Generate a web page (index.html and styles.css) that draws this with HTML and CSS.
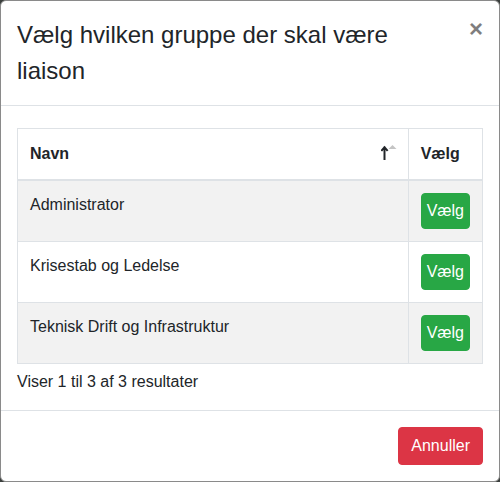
FILE: index.html
```html
<!DOCTYPE html>
<html lang="da">
<head>
<meta charset="utf-8">
<title>Vælg gruppe</title>
<link rel="stylesheet" href="styles.css">
</head>
<body>
<div class="modal">
  <div class="modal-header">
    <h4 class="modal-title">Vælg hvilken gruppe der skal være liaison</h4>
    <button class="close" type="button" aria-label="Luk">×</button>
  </div>
  <div class="modal-body">
    <table class="table">
      <thead>
        <tr>
          <th class="sorted">Navn
            <span class="sort-icon">
              <svg width="16" height="16" viewBox="0 0 16 16">
                <path d="M3.5 15V3.5M1 6.2L3.5 3.2L6 6.2" fill="none" stroke="#212529" stroke-width="2" stroke-linecap="square"/>
                <path d="M7.5 5L11.5 1L15.5 5Z" fill="#c4c4c4"/>
              </svg>
            </span>
          </th>
          <th class="narrow">Vælg</th>
        </tr>
      </thead>
      <tbody>
        <tr class="odd"><td>Administrator</td><td class="narrow"><button class="btn btn-success" type="button">Vælg</button></td></tr>
        <tr><td>Krisestab og Ledelse</td><td class="narrow"><button class="btn btn-success" type="button">Vælg</button></td></tr>
        <tr class="odd"><td>Teknisk Drift og Infrastruktur</td><td class="narrow"><button class="btn btn-success" type="button">Vælg</button></td></tr>
      </tbody>
    </table>
    <div class="info">Viser 1 til 3 af 3 resultater</div>
  </div>
  <div class="modal-footer">
    <button class="btn btn-danger btn-cancel" type="button">Annuller</button>
  </div>
</div>
</body>
</html>
```
FILE: styles.css
```css
* { box-sizing: border-box; }
html, body {
  margin: 0;
  background: #3b3f3d;
}
body {
  font-family: "Liberation Sans", Arial, sans-serif;
  font-size: 16px;
  line-height: 1.5;
  color: #212529;
}
.modal {
  width: 500px;
  height: 482px;
  background: #fff;
  border: 1px solid #8a8a8a;
  border-radius: 6px;
  display: flex;
  flex-direction: column;
  overflow: hidden;
}
.modal-header {
  display: flex;
  align-items: flex-start;
  padding: 16px;
  border-bottom: 1px solid #dee2e6;
}
.modal-title {
  margin: 0;
  font-size: 24px;
  font-weight: 400;
  line-height: 36px;
  padding-right: 12px;
}
.close {
  margin: -16px -16px -16px auto;
  padding: 16px;
  background: transparent;
  border: 0;
  font-family: "Liberation Sans", Arial, sans-serif;
  font-size: 24px;
  font-weight: 700;
  line-height: 1;
  color: #000;
  opacity: .5;
  cursor: pointer;
}
.modal-body {
  padding: 16px;
}
.table {
  width: 100%;
  border-collapse: collapse;
  margin: 6px 0;
  border: 1px solid #dee2e6;
}
.table th,
.table td {
  padding: 12px;
  border: 1px solid #dee2e6;
  text-align: left;
  vertical-align: top;
}
.table thead th {
  padding-top: 13px;
  padding-bottom: 13px;
  vertical-align: bottom;
  border-bottom: 2px solid #dee2e6;
  font-weight: 700;
}
.table th.sorted {
  position: relative;
  padding-right: 30px;
}
.sort-icon {
  position: absolute;
  right: 11px;
  top: 15px;
  width: 16px;
  height: 16px;
  display: block;
}
.sort-icon svg { display: block; }
.table .narrow {
  width: 1%;
  white-space: nowrap;
}
.table tbody tr.odd {
  background: #f2f2f2;
}
.btn {
  display: inline-block;
  font-family: "Liberation Sans", Arial, sans-serif;
  font-size: 16px;
  line-height: 24px;
  border: 1px solid transparent;
  border-radius: 4px;
  color: #fff;
  cursor: pointer;
  vertical-align: top;
}
.btn-success {
  background: #28a745;
  border-color: #28a745;
  padding: 5px 5px;
}
.btn-danger {
  background: #dc3545;
  border-color: #dc3545;
  padding: 6px 12px;
}
.info {
  line-height: 24px;
  white-space: nowrap;
}
.modal-footer {
  display: flex;
  justify-content: flex-end;
  padding: 12px;
  border-top: 1px solid #dee2e6;
}
.btn-cancel {
  margin: 4px;
}
```
